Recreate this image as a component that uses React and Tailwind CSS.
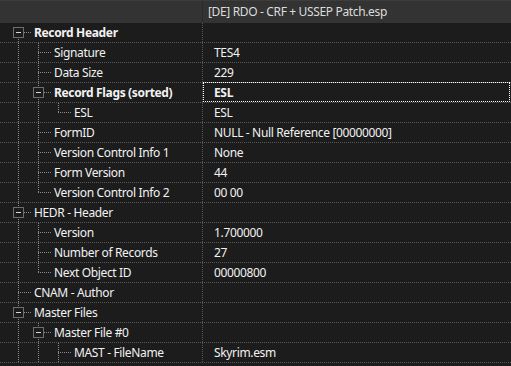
import React from "react";

const rows = [
  { name: "Record Header", level: 0, exp: true, bold: true, anc: [], next: true, first: true },
  { name: "Signature", value: "TES4", level: 1, anc: [true], next: true },
  { name: "Data Size", value: "229", level: 1, anc: [true], next: true },
  { name: "Record Flags (sorted)", value: "ESL", level: 1, exp: true, bold: true, anc: [true], next: true, focus: true },
  { name: "ESL", value: "ESL", level: 2, anc: [true, true], next: false },
  { name: "FormID", value: "NULL - Null Reference [00000000]", level: 1, anc: [true], next: true },
  { name: "Version Control Info 1", value: "None", level: 1, anc: [true], next: true },
  { name: "Form Version", value: "44", level: 1, anc: [true], next: true },
  { name: "Version Control Info 2", value: "00 00", level: 1, anc: [true], next: false },
  { name: "HEDR - Header", level: 0, exp: true, anc: [], next: true },
  { name: "Version", value: "1.700000", level: 1, anc: [true], next: true },
  { name: "Number of Records", value: "27", level: 1, anc: [true], next: true },
  { name: "Next Object ID", value: "00000800", level: 1, anc: [true], next: false },
  { name: "CNAM - Author", level: 0, anc: [], next: true },
  { name: "Master Files", level: 0, exp: true, anc: [], next: true },
  { name: "Master File #0", level: 1, exp: true, anc: [true], next: true },
  { name: "MAST - FileName", value: "Skyrim.esm", level: 2, anc: [true, true], next: true },
];

const LINE = "#8a8a8a";
const MID = 9;
const H = 19;

function vdots(x, y0, y1, key) {
  const out = [];
  for (let y = y0; y <= y1; y++) {
    if (y % 2 === 0) out.push(<rect key={key + y} x={x} y={y} width={1} height={1} />);
  }
  return out;
}
function hdots(y, x0, x1, key) {
  const out = [];
  for (let x = x0; x <= x1; x++) {
    if (x % 2 === 0) out.push(<rect key={key + x} x={x} y={y} width={1} height={1} />);
  }
  return out;
}

function TreeGlyph({ r }) {
  const w = 32 + 20 * r.level;
  const parts = [];
  r.anc.forEach((has, a) => {
    if (has) parts.push(...vdots(18 + 20 * a, 0, H - 1, "a" + a + "-"));
  });
  const cx = 18 + 20 * r.level;
  if (!r.first) parts.push(...vdots(cx, 0, MID, "u"));
  if (r.next) parts.push(...vdots(cx, MID, H - 1, "d"));
  parts.push(...hdots(MID, cx, cx + 13, "h"));
  return (
    <svg width={w} height={H} className="shrink-0" shapeRendering="crispEdges">
      <g fill={LINE}>{parts}</g>
      {r.exp && (
        <g>
          <rect x={cx - 4.5} y={MID - 4.5} width={10} height={10} fill="#1c1c1c" stroke="#6e6e6e" />
          <rect x={cx - 2} y={MID} width={5} height={1} fill="#d8d8d8" />
        </g>
      )}
    </svg>
  );
}

export default function App() {
  return (
    <div
      className="w-[511px] h-[366px] overflow-hidden bg-[#1c1c1c] text-[12px] text-[#f2f2f2] tracking-[-0.35px]"
      style={{ fontFamily: '"Segoe UI", "Noto Sans", sans-serif' }}
    >
      <div className="flex h-[23px] bg-[#333333] border-t border-[#3d3d3d]">
        <div className="w-[203px] border-r border-[#2a2a2a]" />
        <div className="flex-1 flex items-center pl-[5px] text-[#dcdcdc] leading-none">
          [DE] RDO - CRF + USSEP Patch.esp
        </div>
      </div>
      {rows.map((r, i) => (
        <div key={i} className="flex h-[20px] border-b border-dotted border-[#555555]">
          <div className="w-[203px] flex items-center border-r border-dotted border-[#555555] overflow-hidden">
            <TreeGlyph r={r} />
            <span className={"whitespace-nowrap leading-none ml-[2px] " + (r.bold ? "font-bold" : "")}>{r.name}</span>
          </div>
          <div className="relative flex-1 flex items-center pl-[11px]">
            <span className={"whitespace-nowrap leading-none " + (r.bold ? "font-bold" : "")}>{r.value}</span>
            {r.focus && (
              <div className="absolute left-0 right-[1px] top-[-1px] bottom-0 border border-dotted border-white" />
            )}
          </div>
        </div>
      ))}
    </div>
  );
}
